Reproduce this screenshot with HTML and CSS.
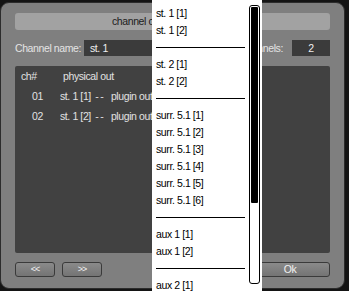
FILE: index.html
```html
<!DOCTYPE html>
<html>
<head>
<meta charset="utf-8">
<link rel="stylesheet" href="styles.css">
</head>
<body>
<div class="window">
  <div class="titlebar"><span class="title-text">channel output settings</span></div>
  <div class="fields">
    <span class="label name-label">Channel name:</span>
    <span class="field name-field">st. 1</span>
    <span class="spacer"></span>
    <span class="label">Number of channels:</span>
    <span class="field count-field">2</span>
  </div>
  <div class="panel">
    <div class="head"><span class="col-ch">ch#</span><span>physical out</span></div>
    <div class="row"><span class="col-num">01</span><span class="out">st. 1 [1] <span class="dash">--</span> plugin out 1</span></div>
    <div class="row"><span class="col-num">02</span><span class="out">st. 1 [2] <span class="dash">--</span> plugin out 2</span></div>
  </div>
  <div class="buttons">
    <span class="btn small">&lt;&lt;</span>
    <span class="btn small">&gt;&gt;</span>
    <span class="spacer"></span>
    <span class="btn ok">Ok</span>
  </div>
</div>
<div class="dropdown">
  <div class="list">
    <div class="item">st. 1 [1]</div>
    <div class="item">st. 1 [2]</div>
    <div class="sep"><span></span></div>
    <div class="item">st. 2 [1]</div>
    <div class="item">st. 2 [2]</div>
    <div class="sep"><span></span></div>
    <div class="item">surr. 5.1 [1]</div>
    <div class="item">surr. 5.1 [2]</div>
    <div class="item">surr. 5.1 [3]</div>
    <div class="item">surr. 5.1 [4]</div>
    <div class="item">surr. 5.1 [5]</div>
    <div class="item">surr. 5.1 [6]</div>
    <div class="sep"><span></span></div>
    <div class="item">aux 1 [1]</div>
    <div class="item">aux 1 [2]</div>
    <div class="sep"><span></span></div>
    <div class="item">aux 2 [1]</div>
  </div>
  <div class="scrollbar"><div class="thumb"></div></div>
</div>
</body>
</html>
```

FILE: styles.css
```css
html, body {
  margin: 0;
  padding: 0;
}
body {
  width: 349px;
  height: 291px;
  overflow: hidden;
  background: #141414;
  font-family: "Liberation Sans", Arial, sans-serif;
  font-size: 10.5px;
  letter-spacing: -0.4px;
  position: relative;
}
.window {
  box-sizing: border-box;
  margin-top: 2px;
  width: 345px;
  height: 287px;
  background: #7f7f7f;
  border: 1px solid #2c2c2c;
  border-radius: 9px;
  padding: 10px 14px 0 14px;
  display: flex;
  flex-direction: column;
}
.titlebar {
  height: 17px;
  line-height: 17px;
  background: #a2a2a2;
  border-radius: 3px;
  color: #1c1c1c;
  padding-left: 97px;
  white-space: nowrap;
  overflow: hidden;
}
.title-text {
  display: inline-block;
  max-width: 40px;
  overflow: hidden;
  vertical-align: top;
}
.fields {
  margin-top: 10px;
  height: 16px;
  display: flex;
  align-items: center;
  white-space: nowrap;
}
.label {
  color: #e4e4e4;
}
.name-label {
  width: 69px;
}
.field {
  box-sizing: border-box;
  height: 16px;
  line-height: 16px;
  background: #3b3b3b;
  color: #efefef;
}
.name-field {
  width: 100px;
  padding-left: 6px;
}
.spacer {
  flex: 1;
}
.count-field {
  width: 38px;
  margin-left: 9px;
  text-align: center;
}
.panel {
  margin-top: 10px;
  height: 187px;
  background: #414141;
  border-radius: 2px;
  color: #e2e2e2;
}
.head {
  display: flex;
  height: 20px;
  line-height: 20px;
  padding-left: 6px;
}
.col-ch {
  width: 42px;
}
.row {
  display: flex;
  height: 20px;
  line-height: 20px;
  padding-left: 17px;
}
.col-num {
  width: 28px;
}
.out {
  white-space: pre;
  max-width: 92px;
  overflow: hidden;
}
.dash {
  letter-spacing: 1.5px;
  margin: 0 3px 0 2px;
}
.buttons {
  margin-top: 9px;
  height: 15px;
  display: flex;
  gap: 7px;
}
.btn {
  box-sizing: border-box;
  height: 15px;
  line-height: 13px;
  border: 1px solid #3a3a3a;
  border-radius: 3px;
  background: linear-gradient(#8a8a8a, #747474);
  color: #f2f2f2;
  text-align: center;
}
.small {
  width: 40px;
  font-size: 9px;
  letter-spacing: -1px;
}
.ok {
  width: 80px;
}
.dropdown {
  position: absolute;
  left: 152px;
  top: 0;
  width: 110px;
  height: 291px;
  background: #ffffff;
  display: flex;
  overflow: hidden;
}
.list {
  width: 97px;
  padding-top: 5px;
}
.item {
  height: 17px;
  line-height: 17px;
  padding-left: 4px;
  color: #000;
  white-space: nowrap;
}
.sep {
  height: 17px;
  display: flex;
  align-items: center;
}
.sep span {
  display: block;
  margin-left: 4px;
  width: 89px;
  height: 1px;
  margin-top: -1px;
  background: #000;
}
.scrollbar {
  box-sizing: border-box;
  margin-top: 5px;
  width: 11px;
  height: 279px;
  border: 1px solid #000;
  border-radius: 3px;
  padding: 1px;
  background: #fff;
}
.thumb {
  height: 196px;
  background: #000;
  border-radius: 1px;
}
```
